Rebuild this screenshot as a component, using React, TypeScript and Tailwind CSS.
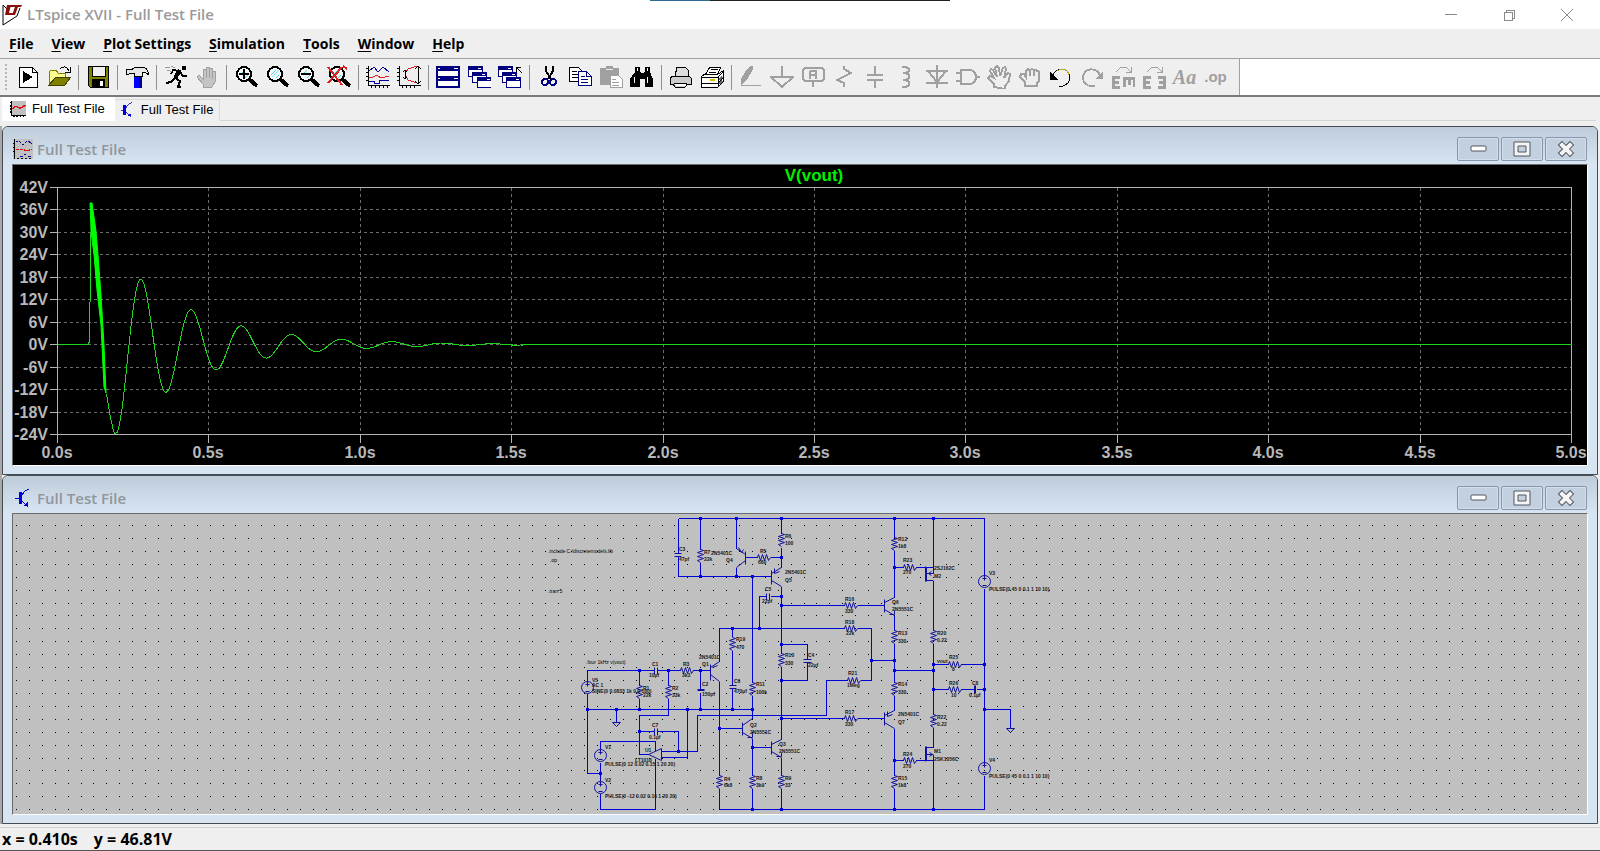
import { ReactNode } from 'react';

const menuItems = ['File', 'View', 'Plot Settings', 'Simulation', 'Tools', 'Window', 'Help'];

const GRAY = '#a0a0a0';
const NAVY = '#000080';

interface ToolIcon {
  label: string;
  art: ReactNode;
}

const lens = (
  <>
    <circle cx="10" cy="9" r="7" fill="#f0f8f8" stroke="#000" strokeWidth="2" />
    <path d="M6 10l5-5M11 13l3-3" stroke="#5dd" strokeWidth="1" />
    <path d="M15 14l8 7" stroke="#000" strokeWidth="4" />
  </>
);

const miniWindow = (x: number, y: number) => (
  <g key={x}>
    <path d={`M${x} ${y}h14v10h-14z`} fill="#fff" stroke={NAVY} strokeWidth="1" />
    <path d={`M${x} ${y}h14v4h-14z`} fill={NAVY} />
    <path d={`M${x + 10} ${y + 2}h3`} stroke="#fff" />
  </g>
);

// Each inner list is one group, groups are split by a thin separator
const toolGroups: ToolIcon[][] = [
  [
    {
      label: 'New simulation',
      art: (
        <>
          <path d="M3 2h13l5 5v15H3z" fill="#fff" stroke="#000" />
          <path d="M16 2v5h5" stroke="#000" />
          <path d="M7 6v12l10-6z" fill="#000" />
        </>
      ),
    },
    {
      label: 'Open',
      art: (
        <>
          <path d="M2 19V7l2-2h5l2 3h7v4h-8z" fill="#ffff90" stroke="#808000" />
          <path d="M2 20l7-8h15l-6 8z" fill="#808000" stroke="#404000" />
          <path d="M13 4c3-3 7-3 9 2M23 2v5h-5" stroke="#000" />
        </>
      ),
    },
  ],
  [
    {
      label: 'Save',
      art: (
        <>
          <path d="M2 1h20v21H4l-2-2z" fill="#808000" stroke="#000" />
          <path d="M6 1h13v10H6z" fill="#efefef" stroke="#000" />
          <path d="M6 14h13v8H6z" fill="#000" />
          <path d="M14 16h3v5h-3z" fill="#fff" />
        </>
      ),
    },
  ],
  [
    {
      label: 'Control panel',
      art: (
        <>
          <path d="M9 10h6v13H9z" fill="#0000ff" />
          <path d="M14 10h3v13h-3z" fill="#000090" />
          <path d="M1 4h3l2 1 5-3h6c4 0 6 3 7 8l-4-3h-3v4H9V8H6L4 9H1z" fill="#e6e6e6" stroke="#000" />
        </>
      ),
    },
  ],
  [
    {
      label: 'Run',
      art: (
        <>
          <path d="M18 1h4v4h-4z" fill="#000" />
          <path d="M11 13l5 3-2 6h3M11 13l-4 4-5 1M16 7l3 4h4M15 6l-6-1-2 4" stroke="#000" strokeWidth="2" />
          <path d="M16 5l-5 8" stroke="#000" strokeWidth="4" />
          <path d="M1 3c2-2 3 0 5 0M3 6c2-2 3 1 5 0M7 1l4 2" stroke="#999" />
        </>
      ),
    },
    {
      label: 'Halt',
      art: (
        <>
          <path d="M8 22v-3l-6-7 2-2 4 4V4h3v8V2h3v10V3h3v10V6h3v11l-3 5z" fill="#c4c4c4" stroke={GRAY} />
          <path d="M11 5v8M14 5v8M17 6v8" stroke={GRAY} />
        </>
      ),
    },
  ],
  [
    {
      label: 'Zoom in',
      art: (
        <>
          {lens}
          <path d="M5 9h10M10 4v10" stroke="#000" strokeWidth="2" />
        </>
      ),
    },
    {
      label: 'Pan',
      art: (
        <>
          {lens}
          <path d="M7 12l7-7" stroke="#8ee" />
        </>
      ),
    },
    {
      label: 'Zoom out',
      art: (
        <>
          {lens}
          <path d="M5 9h10" stroke="#000" strokeWidth="2" />
        </>
      ),
    },
    {
      label: 'Zoom to fit',
      art: (
        <>
          {lens}
          <path d="M1 2l14 18M15 2L1 18M16 1l4 3" stroke="#e02020" strokeWidth="2" />
        </>
      ),
    },
  ],
  [
    {
      label: 'Autorange',
      art: (
        <>
          <path d="M2 1v19h22" stroke="#000" />
          <path d="M0 3h2M0 7h2M0 11h2M0 15h2M5 20v3M9 20v3M13 20v3M17 20v3M21 20v3" stroke="#000" />
          <path d="M3 6l5-4 4 5 5-5 6 5" stroke="#0000a0" />
          <path d="M3 12h4l4-2 4 3 8-2" stroke="#e02020" />
          <path d="M3 16h5v2h5v-3h10" stroke="#0000a0" />
        </>
      ),
    },
    {
      label: 'Pick visible traces',
      art: (
        <>
          <path d="M2 1v19h22" stroke="#000" />
          <path d="M0 3h2M0 7h2M0 11h2M0 15h2M5 20v3M9 20v3M13 20v3M17 20v3" stroke="#000" />
          <path d="M20 1l-9 3-3 5 3 6 9 3" stroke="#e02020" />
          <path d="M8 5v9M6 7l2-2 2 2M6 12l2 2 2-2M21 1v18M18 4l3-3 3 3M18 16l3 3 3-3" stroke="#000" />
        </>
      ),
    },
  ],
  [
    {
      label: 'Tile windows',
      art: (
        <>
          <path d="M1 2h22v20H1z" fill="#fff" stroke={NAVY} strokeWidth="2" />
          <path d="M1 1h22v5H1zM1 11h22v5H1z" fill={NAVY} />
          <path d="M2 3h2M18 3h4M2 13h2M18 13h4" stroke="#fff" />
        </>
      ),
    },
    {
      label: 'Cascade windows',
      art: <>{[miniWindow(1, 1), miniWindow(5, 7), miniWindow(10, 12)]}</>,
    },
    {
      label: 'Close all windows',
      art: (
        <>
          {[miniWindow(0, 1), miniWindow(4, 7), miniWindow(8, 12)]}
          <path d="M18 7V2h5M18 2l6 6" stroke="#000" />
        </>
      ),
    },
  ],
  [
    {
      label: 'Cut',
      art: (
        <>
          <path d="M9 1v5l5 8M16 1v5l-5 8" stroke="#000" strokeWidth="2" />
          <circle cx="8" cy="17" r="3" stroke={NAVY} strokeWidth="2" />
          <circle cx="16" cy="17" r="3" stroke={NAVY} strokeWidth="2" />
        </>
      ),
    },
    {
      label: 'Copy',
      art: (
        <>
          <path d="M1 2h9l4 4v10H1z" fill="#fff" stroke="#000" />
          <path d="M4 6h5M4 9h7M4 12h7" stroke="#000" />
          <path d="M10 6h8l5 5v9H10z" fill="#fff" stroke={NAVY} />
          <path d="M18 6v5h5M13 11h4M13 14h7M13 17h7" stroke={NAVY} />
        </>
      ),
    },
    {
      label: 'Paste',
      art: (
        <>
          <path d="M1 3h6V1h7v2h6v7h-8v10H1z" fill={GRAY} />
          <path d="M7 4h7" stroke="#efefef" />
          <path d="M11 10h8l4 4v8H11z" fill="#fff" stroke={GRAY} />
          <path d="M13 14h4M13 17h7M13 20h7" stroke={GRAY} />
        </>
      ),
    },
    {
      label: 'Find',
      art: (
        <>
          <path d="M5 2h5v4l1 2h3l1-2V2h5v5l3 7v8h-8v-8h-5v8H0v-8l5-7z" fill="#000" />
          <path d="M7 3v3M17 3v3M4 12v6M17 12v6" stroke="#fff" />
        </>
      ),
    },
  ],
  [
    {
      label: 'Print',
      art: (
        <>
          <path d="M6 11L8 2h8l3 3v6" fill="#ddd" stroke="#000" />
          <path d="M4 11h16l2 2v6h-4l-2 3H6l-2-3H1v-6z" fill="#ccc" stroke="#000" />
          <path d="M5 18h13" stroke="#000" />
          <path d="M6 19h11v2H7z" fill="#fff" />
        </>
      ),
    },
    {
      label: 'Print setup',
      art: (
        <>
          <path d="M5 10l5-8h11l-4 8" fill="#fff" stroke="#000" />
          <path d="M11 4h7M9 7h7" stroke="#000" />
          <path d="M1 12l4-3h13l5-3v11l-5 5H1z" fill="#fff" stroke="#000" />
          <path d="M1 12h17v10M18 12l5-5M1 18h17l5-5" stroke="#000" />
          <path d="M10 15h5" stroke="#d0c000" strokeWidth="2" />
          <path d="M19 15l3-3M19 19l3-3" stroke="#666" strokeWidth="2" />
        </>
      ),
    },
  ],
  [
    {
      label: 'Draw wire',
      art: (
        <>
          <path d="M8 4l3-3h3v3L8 15l-5 4-1-5z" fill={GRAY} />
          <path d="M2 16v4h20" stroke={GRAY} />
        </>
      ),
    },
    {
      label: 'Ground',
      art: <path d="M12 1v11M1 12h22L12 22z" stroke={GRAY} strokeWidth="2" />,
    },
    {
      label: 'Label net',
      art: (
        <>
          <path d="M4 3h17l2 2v9l-2 2H4l-2-2V5z" stroke={GRAY} strokeWidth="2" />
          <path d="M12 16v6" stroke={GRAY} strokeWidth="2" />
          <path d="M9 14V7l1-1h5v8M9 10h6" stroke={GRAY} strokeWidth="2" />
        </>
      ),
    },
    {
      label: 'Resistor',
      art: <path d="M12 1v3l7 4-14 7 7 3v4" stroke={GRAY} strokeWidth="2" />,
    },
    {
      label: 'Capacitor',
      art: <path d="M12 1v9M12 15v8M4 10h16M4 15h16" stroke={GRAY} strokeWidth="2" />,
    },
    {
      label: 'Inductor',
      art: (
        <path
          d="M8 2h4l3 2v2l-3 2H9M9 8h3l3 2v3l-3 2H9M9 15h3l3 2v3l-3 2H8"
          stroke={GRAY}
          strokeWidth="2"
        />
      ),
    },
    {
      label: 'Diode',
      art: <path d="M12 0v23M1 6h22M3 6l9 11 9-11M1 18h22" stroke={GRAY} strokeWidth="2" />,
    },
    {
      label: 'Component',
      art: (
        <path
          d="M5 5h8c5 0 7 4 7 7s-2 7-7 7H5zM0 8h5M0 16h5M20 12h4"
          stroke={GRAY}
          strokeWidth="2"
        />
      ),
    },
    {
      label: 'Move',
      art: (
        <path
          d="M7 22v-3L1 13l2-2 4 2L3 6l1-2 2 1 4 7-2-9 2-2 2 2 1 8 3-8 2-1 1 2-2 9 4-5 2 1-1 7-4 5v3z"
          stroke={GRAY}
          strokeWidth="2"
        />
      ),
    },
    {
      label: 'Drag',
      art: (
        <path
          d="M7 21v-4l-5-5 1-3h3l2 3V6l2-2 2 2v5V5l2-1 2 1v6-5l2-1 3 2v9l-2 2v3z"
          stroke={GRAY}
          strokeWidth="2"
        />
      ),
    },
    {
      label: 'Undo',
      art: (
        <>
          <path d="M4 11c2-9 16-9 17 1 0 6-4 8-7 9h-4" stroke="#000" />
          <path d="M8 6c4-3 10-3 12 4" stroke="#b0a820" />
          <path d="M1 6v9h8z" fill="#000" />
        </>
      ),
    },
    {
      label: 'Redo',
      art: (
        <>
          <path d="M20 11C18 2 4 2 3 12c0 6 4 9 9 9h3" stroke={GRAY} strokeWidth="2" />
          <path d="M23 6v8h-8z" fill={GRAY} />
        </>
      ),
    },
    {
      label: 'Rotate',
      art: (
        <>
          <path d="M9 12H2v10h7M2 17h6M13 22v-9h10v9M18 13v7" stroke={GRAY} strokeWidth="3" />
          <path d="M5 7l5-5h5l5 5M20 2v5h-5" stroke={GRAY} />
        </>
      ),
    },
    {
      label: 'Mirror',
      art: (
        <>
          <path d="M9 12H2v10h7M2 17h6M16 12h6v10h-6M22 17h-5" stroke={GRAY} strokeWidth="3" />
          <path d="M5 7l5-5h5l5 5M20 2v5h-5" stroke={GRAY} />
        </>
      ),
    },
  ],
];

const PlotGlyph = ({ size }: { size: string }) => (
  <svg className={size} viewBox="0 0 20 20" fill="none" shapeRendering="crispEdges" aria-hidden="true">
    <path d="M2 0h18v17H2z" fill="#c0c0c0" />
    <path d="M2 0v18h18M0 2h2M0 6h2M0 10h2M0 14h2M5 18v2M9 18v2M13 18v2M17 18v2" stroke="#000" strokeWidth="2" />
    <path d="M3 10l3-3h3l3 2 3-1 4-3" stroke="#e01010" strokeWidth="2" />
  </svg>
);

const WaveGlyph = () => (
  <svg className="size-5" viewBox="0 0 20 20" fill="none" shapeRendering="crispEdges" aria-hidden="true">
    <path d="M0 0h20v20H0z" fill="#c0c0c0" />
    <path d="M1 0v20M0 4h2M0 8h2M0 12h2M4 19h2M8 19h2M12 19h2M16 19h2" stroke="#000" />
    <path d="M3 2h2M6 2l4 4 4-4M15 2l4 3M7 17h4M11 15h2M15 17h4" stroke="#0000a0" strokeDasharray="3 1" />
    <path d="M3 10h6l5 2 5-2" stroke="#e01010" strokeDasharray="3 1" />
  </svg>
);

const TransistorGlyph = ({ size }: { size: string }) => (
  <svg className={size} viewBox="0 0 20 20" fill="none" shapeRendering="crispEdges" aria-hidden="true">
    <path d="M2 10h5M8 8l4-5 4-2M8 12l7 7" stroke="#0000d8" strokeWidth="1" />
    <path d="M7 4v12" stroke="#0000d8" strokeWidth="3" />
    <path d="M15 14v4h-5z" fill="#0000d8" />
  </svg>
);

const Toolbar = () => (
  <div className="flex h-[38px] border-b-2 border-[#7a7a7a] bg-white" role="toolbar" aria-label="Main">
    <div className="flex items-center border-r border-[#a0a0a0] bg-[#efefef] pr-2">
      <div className="ml-[5px] mr-[5px] h-[26px] border-l-2 border-dotted border-[#b8b8b8]" />
      {toolGroups.map((group, i) => (
        <div key={i} className="flex items-center">
          {i > 0 && (
            <div className="flex w-2 justify-center">
              <div className="h-[25px] w-px bg-[#909090]" />
            </div>
          )}
          {group.map((tool) => (
            <button key={tool.label} type="button" aria-label={tool.label} className="flex w-[31px] justify-center">
              <svg className="size-6" viewBox="0 0 24 24" fill="none" shapeRendering="crispEdges">
                {tool.art}
              </svg>
            </button>
          ))}
        </div>
      ))}
      <button
        type="button"
        aria-label="Text"
        className="w-[31px] font-['Liberation_Serif',serif] text-[20px]/[24px] font-bold italic text-[#a0a0a0]"
      >
        Aa
      </button>
      <button
        type="button"
        aria-label="SPICE directive"
        className="w-[31px] font-['Liberation_Sans',sans-serif] text-[15px]/[24px] font-bold text-[#a0a0a0]"
      >
        .op
      </button>
    </div>
  </div>
);

const DocumentTabs = () => (
  <div className="flex h-[29px] items-start bg-[#efefef] pl-0.5 pr-1 font-['Liberation_Sans',sans-serif] text-[13px]" role="tablist">
    <button type="button" role="tab" aria-selected="true" className="flex h-6 items-center gap-1.5 bg-white pl-2 pr-2.5">
      <PlotGlyph size="size-4" />
      Full Test File
    </button>
    <button
      type="button"
      role="tab"
      aria-selected="false"
      className="mt-0.5 flex h-[21px] items-center gap-1.5 border-r border-t border-[#dadada] pl-1 pr-1.5"
    >
      <TransistorGlyph size="size-4" />
      Full Test File
    </button>
    <div className="h-6 flex-1 border-b border-[#d4d4d4]" />
  </div>
);

const frameButton =
  'flex h-6 w-[42px] items-center justify-center rounded-[2px] border border-[#8796ad] bg-[#c3d0df] shadow-[inset_0_0_0_1px_#d5dfea]';

const WindowFrame = ({ title, icon, children }: { title: string; icon: ReactNode; children: ReactNode }) => (
  <section className="flex min-h-0 flex-1 flex-col rounded-t-[6px] border border-[#444b52] bg-[#d7e4f2] px-[9px] pb-2">
    <header className="-mx-[9px] flex h-[37px] shrink-0 items-center rounded-t-[5px] bg-linear-to-b from-[#bfcddb] to-[#d7e4f2] px-2.5 pt-1.5">
      <span className="flex">{icon}</span>
      <h2 className="ml-1 flex-1 text-[15px]/[20px] font-semibold text-[#90969c]">{title}</h2>
      <div className="flex gap-0.5">
        <button type="button" aria-label="Minimize" className={frameButton}>
          <svg className="h-[7px] w-[17px]" viewBox="0 0 17 7">
            <rect x="1" y="1" width="15" height="5" rx="1" fill="#fff" stroke="#50565e" />
          </svg>
        </button>
        <button type="button" aria-label="Maximize" className={frameButton}>
          <svg className="h-4 w-[18px]" viewBox="0 0 18 16">
            <path
              d="M1 1h16v14H1zM5 5v6h8V5z"
              fill="#f4f4f4"
              fillRule="evenodd"
              stroke="#50565e"
              strokeWidth="1"
            />
          </svg>
        </button>
        <button type="button" aria-label="Close" className={frameButton}>
          <svg className="h-4 w-[18px]" viewBox="0 0 18 16" fill="none" strokeLinecap="square">
            <path d="M5 4l8 8M13 4l-8 8" stroke="#50565e" strokeWidth="6" />
            <path d="M5 4l8 8M13 4l-8 8" stroke="#f4f4f4" strokeWidth="4" />
          </svg>
        </button>
      </div>
    </header>
    <div className="min-h-0 flex-1 border border-b-white border-l-[#6b6b6b] border-r-white border-t-[#6b6b6b]">
      {children}
    </div>
  </section>
);

const voltTicks = [42, 36, 30, 24, 18, 12, 6, 0, -6, -12, -18, -24];
const timeTicks = ['0.0s', '0.5s', '1.0s', '1.5s', '2.0s', '2.5s', '3.0s', '3.5s', '4.0s', '4.5s', '5.0s'];

const tickX = (i: number) => Math.round(44 + i * 151.4);
const tickY = (i: number) => Math.round(22 + i * 22.45);

// Damped oscillation after the first swing, flat once it has died out
const ringing = () => {
  let d = 'M93 229L97 252';
  for (let x = 99; x <= 520; x += 1) {
    const t = x - 103;
    const y = 179 + 89 * Math.exp(-0.0125 * t) * Math.cos((2 * Math.PI * t) / 50.2);
    d += `L${x} ${y.toFixed(1)}`;
  }
  return `${d}L521 179H1558`;
};

const WaveformPlot = () => (
  <svg className="block size-full bg-black" viewBox="0 0 1574 300" role="img" aria-label="V(vout) transient waveform">
    <g shapeRendering="crispEdges" fill="none" transform="translate(.5 .5)">
      <g stroke="#6c6c6c" strokeDasharray="3 3">
        {voltTicks.slice(1, -1).map((v, i) => (
          <path key={v} d={`M44 ${tickY(i + 1)}H1558`} />
        ))}
        {timeTicks.slice(1, -1).map((t, i) => (
          <path key={t} d={`M${tickX(i + 1)} 22V269`} />
        ))}
      </g>
      <path d="M44 22H1558V269H44z" stroke="#b4b4b4" />
      {voltTicks.map((v, i) => (
        <path key={v} d={`M36 ${tickY(i)}H44`} stroke="#b4b4b4" />
      ))}
      {timeTicks.map((t, i) => (
        <path key={t} d={`M${tickX(i)} 269V277`} stroke="#b4b4b4" />
      ))}
      <path d="M44 179H75L76 175L77 100L78 38" stroke="#1ed61e" />
      <path d={ringing()} stroke="#1ed61e" />
    </g>
    <path
      d="M77 38H79L83 66L85 90L88 130L91 180L92 205L93 228L91 222L88 160L84 125L81 90L78 66z"
      fill="#00ff00"
      stroke="#00ff00"
    />
    <g className="font-['Liberation_Sans',sans-serif] text-[16px] font-bold" fill="#b8b8b8">
      {voltTicks.map((v, i) => (
        <text key={v} x="35" y={tickY(i) + 6} textAnchor="end">
          {v}V
        </text>
      ))}
      {timeTicks.map((t, i) => (
        <text key={t} x={tickX(i)} y="293" textAnchor="middle">
          {t}
        </text>
      ))}
      <text x="801" y="16" className="text-[17px]" textAnchor="middle" fill="#00f000">
        V(vout)
      </text>
    </g>
  </svg>
);

const gridDots = () => {
  let d = '';
  for (let r = 0; r < 23; r++) {
    for (let c = 0; c < 122; c++) {
      d += `M${Math.round(16 + c * 12.91)} ${Math.round(525 + r * 12.92)}h1v1h-1z`;
    }
  }
  return d;
};

const wires = [
  'M678 518H984M678 518V553M678 556V576H771M700 518V549M700 562V576M736 518V548M736 567V576',
  'M745 557H757M770 557H781M781 518V533M781 547V567M781 586V653M781 666V739M781 757V775M781 788V809',
  'M759 628V596H766M770 596H781M752 576V682M752 695V718M752 738V775M752 788V809',
  'M719 661V628H844M719 681V775M719 788V809H984M719 728H742M752 747H771',
  'M732 628V636M732 650V685M732 688V709M700 670V689M700 692V709',
  'M587 680V670H654M657 670H680M692 670H710M587 693V773H600M587 709H752',
  'M639 670V685M639 698V709M668 670V685M668 698V715H639V754H648',
  'M616 709V722M639 731H654M657 731H678V751M661 751H697V715H826V680H847M661 757H687V709',
  'M655 750V741H600V749M600 762V780M600 793V809H655V758',
  'M781 605H844M857 605H884M857 628H871V680H860M871 660H894M781 644H807V659M807 662V680H781',
  'M781 718H844M857 718H884M894 518V537M894 550V597M894 615V630M894 643V682M894 695V710M894 728V775M894 788V809',
  'M894 567H903M915 567H933M933 518V573M933 580V630M933 643V714M933 727V747M933 754V809M894 760H903M915 760H933',
  'M894 670H933M933 664H948M960 664H984M933 689H948M960 689H973M976 689H984',
  'M984 518V575M984 588V762M984 775V809M984 709H1010V728',
];

const junctions: [number, number][] = [
  [700, 518], [736, 518], [781, 518], [894, 518], [933, 518], [781, 557], [700, 576], [736, 576], [752, 576],
  [781, 596], [781, 605], [732, 628], [759, 628], [781, 644], [871, 660], [894, 660], [894, 670], [933, 670],
  [933, 664], [984, 664], [933, 689], [984, 689], [639, 670], [668, 670], [700, 670], [587, 709], [616, 709],
  [639, 709], [687, 709], [700, 709], [732, 709], [752, 709], [984, 709], [639, 731], [678, 751], [719, 728],
  [752, 747], [781, 680], [781, 718], [600, 773], [894, 567], [894, 760], [752, 809], [781, 809], [894, 809],
  [933, 809],
];

const uprightResistors: [number, number][] = [
  [700, 549], [781, 533], [752, 682], [732, 637], [781, 653], [639, 685], [668, 685], [719, 775], [752, 775],
  [781, 775], [894, 537], [894, 630], [894, 682], [894, 775], [933, 630], [933, 714],
];

const flatResistors: [number, number][] = [
  [757, 557], [680, 670], [844, 605], [844, 628], [847, 680], [844, 718], [903, 567], [903, 760], [948, 664],
  [948, 689],
];

const sources: [number, number][] = [[587, 687], [600, 755], [600, 787], [984, 581], [984, 768]];

const symbols = [
  // capacitors
  'M674 553H681M674 556H681M766 593V600M769 593V600M729 685H736M729 688H736M697 689H704M697 690H704',
  'M654 667V674M657 667V674M654 728V735M657 728V735M803 659H811M803 662H811M974 685V693M975 685V693',
  // bipolar transistors
  'M745 551V564M745 554L736 548M745 560L736 567M771 570V584M771 573L781 567M771 580L781 586',
  'M710 664V680M710 667L719 661M710 674L719 681M742 722V735M742 725L752 718M742 732L752 738',
  'M771 741V754M771 744L781 739M771 751L781 757M884 599V612M884 602L894 597M884 609L894 615',
  'M884 712V725M884 715L894 710M884 722L894 728',
  'M738 547L741 552L743 549M774 573L779 571M774 568V573M712 667L717 665M747 737H752V733M776 756H781V752',
  'M889 614H894V610M887 716L892 714M887 711V716',
  // mosfets
  'M925 566V581M926 567V581M926 573H933M926 580H933M931 571L928 573L931 575',
  'M925 746V761M926 746V760M926 747H933M926 754H933M929 752L932 754L929 756',
  // op amp
  'M648 754L661 748V760z',
  // grounds
  'M612 722H620L616 726zM1006 728H1014L1010 732z',
];

const directives: [number, number, string][] = [
  [548, 553, '.include C:/discretemodels.lib'], [550, 562, '.op'], [548, 593, '.tran 5'],
  [586, 664, '.four 1kHz v(vout)'],
];

const labels: [number, number, string][] = [
  [679, 551, 'C3'], [679, 561, '47pf'], [704, 554, 'R7'], [704, 561, '22k'], [711, 555, '2N5401C'], [726, 562, 'Q4'],
  [760, 553, 'R5'], [758, 564, '680'], [785, 538, 'R6'], [785, 545, '100'], [785, 574, '2N5401C'], [785, 582, 'Q5'],
  [765, 591, 'C5'], [762, 603, '22pf'], [736, 641, 'R19'], [736, 649, '470'], [699, 659, '2N5401C'], [702, 666, 'Q1'],
  [652, 666, 'C1'], [649, 677, '10µf'], [683, 666, 'R3'], [682, 677, '3k3'], [702, 686, 'C2'], [702, 696, '150pf'],
  [734, 683, 'C6'], [734, 693, '470µf'], [756, 686, 'R11'], [756, 694, '100k'], [643, 690, 'R1'], [643, 697, '22k'],
  [672, 690, 'R2'], [672, 697, '33k'], [592, 682, 'V5'], [592, 687, 'AC 1'], [592, 693, 'SINE(0 0.0833 1k 0 0 180)'],
  [652, 727, 'C7'], [649, 739, '0.1µf'], [605, 749, 'V1'], [645, 752, 'U1'], [635, 762, 'LT1018'],
  [605, 766, 'PULSE(0 12 0.02 0.15 1 20 20)'], [605, 782, 'V2'], [605, 798, 'PULSE(0 -12 0.02 0.16 1 20 20)'],
  [750, 727, 'Q2'], [750, 734, '2N5551C'], [779, 746, 'Q3'], [779, 753, '2N5551C'], [724, 781, 'R4'], [724, 787, '6k8'],
  [756, 780, 'R8'], [756, 787, '3k9'], [785, 780, 'R9'], [785, 787, '33'], [785, 657, 'R10'], [785, 665, '330'],
  [808, 657, 'C4'], [808, 667, '22µf'], [845, 601, 'R16'], [845, 613, '330'], [845, 624, 'R18'], [846, 635, '22k'],
  [848, 675, 'R21'], [847, 687, '1Meg'], [845, 714, 'R17'], [845, 726, '330'], [898, 541, 'R12'], [898, 548, '1k8'],
  [903, 562, 'R23'], [903, 574, '270'], [934, 570, '2SJ162C'], [934, 578, 'M2'], [892, 604, 'Q6'], [892, 611, '2N5551C'],
  [898, 635, 'R13'], [898, 643, '330.'], [937, 635, 'R20'], [937, 642, '0.22'], [937, 663, 'vout'], [949, 659, 'R25'],
  [952, 671, '8'], [949, 685, 'R26'], [951, 697, '10'], [972, 685, 'C8'], [969, 697, '0.1µf'], [898, 686, 'R14'],
  [898, 694, '330.'], [898, 716, '2N5401C'], [898, 724, 'Q7'], [937, 719, 'R22'], [937, 726, '0.22'],
  [934, 753, 'M1'], [934, 761, '2SK1056C'], [903, 756, 'R24'], [903, 768, '270'], [898, 780, 'R15'], [898, 787, '1k8'],
  [989, 575, 'V3'], [989, 591, 'PULSE(0 45 0 0.1 1 10 10)'], [989, 762, 'V4'], [989, 778, 'PULSE(0 45 0 0.1 1 10 10)'],
];

const Schematic = () => (
  <svg className="block size-full bg-[#c0c0c0]" viewBox="13 514 1574 300" role="img" aria-label="Amplifier schematic">
    <g shapeRendering="crispEdges" fill="none">
      <path d={gridDots()} fill="#000" />
      <path d={wires.join('')} stroke="#0000d8" transform="translate(.5 .5)" />
      {junctions.map(([x, y]) => (
        <path key={`${x}-${y}`} d={`M${x - 1} ${y - 1}h3v3h-3z`} fill="#0000e0" />
      ))}
    </g>
    <g fill="none" stroke="#1010a0" transform="translate(.5 .5)">
      <path d={symbols.join('')} />
      {uprightResistors.map(([x, y]) => (
        <path key={`${x}-${y}`} d={`M${x} ${y}l3 1l-6 2l6 2l-6 2l6 2l-6 2l3 2`} />
      ))}
      {flatResistors.map(([x, y]) => (
        <path key={`${x}-${y}`} d={`M${x} ${y}l1 -3l2 6l2 -6l2 6l2 -6l2 6l2 -3`} />
      ))}
      {sources.map(([x, y]) => (
        <g key={`${x}-${y}`}>
          <circle cx={x} cy={y} r="6" />
          <path d={`M${x - 2} ${y - 3}h4M${x} ${y - 6}v5M${x - 2} ${y + 4}h4`} />
        </g>
      ))}
    </g>
    <g className="font-['Liberation_Sans',sans-serif] text-[5px]" fill="#000">
      {directives.map(([x, y, text]) => (
        <text key={text} x={x} y={y}>
          {text}
        </text>
      ))}
    </g>
    <g className="font-['Liberation_Sans',sans-serif] text-[5px] font-bold" fill="#181818">
      {labels.map(([x, y, text]) => (
        <text key={`${x}-${y}`} x={x} y={y}>
          {text}
        </text>
      ))}
    </g>
  </svg>
);

export default function App() {
  return (
    <div className="flex h-screen flex-col bg-[#efefef] font-['Open_Sans','Noto_Sans',sans-serif] text-black">
      <header className="relative flex h-[29px] shrink-0 items-center bg-white">
        <div className="absolute inset-x-0 top-0 flex h-px">
          <div className="ml-[40.6%] w-[3.75%] bg-[#2e6b94]" />
          <div className="w-[15%] bg-[#222]" />
        </div>
        <svg className="ml-0.5 h-[22px] w-5" viewBox="0 0 20 22" fill="none" aria-hidden="true">
          <path d="M1 1v20l14-9 3-8M1 1l6 6" stroke="#000" />
          <path d="M5 1h4L7 9h4l-1 2H3zM9 1h11l-1 2h-3l-3 8h-3l3-8h-5z" fill="#8a1010" />
        </svg>
        <h1 className="ml-[5px] flex-1 text-[15px] font-semibold text-[#9a9a9a]">LTspice XVII - Full Test File</h1>
        <div className="flex h-full">
          <button type="button" aria-label="Minimize" className="flex w-[58px] items-center justify-center">
            <span className="h-px w-3 bg-[#8a8a8a]" />
          </button>
          <button type="button" aria-label="Restore" className="flex w-[58px] items-center justify-center">
            <svg className="size-3" viewBox="0 0 12 12" fill="none" stroke="#8a8a8a" shapeRendering="crispEdges">
              <path d="M1 3h8v8H1zM3 3V1h8v8H9" />
            </svg>
          </button>
          <button type="button" aria-label="Close" className="mr-1 flex w-[58px] items-center justify-center">
            <svg className="size-3" viewBox="0 0 12 12" stroke="#8a8a8a">
              <path d="M0 0l12 12M12 0L0 12" />
            </svg>
          </button>
        </div>
      </header>

      <nav className="flex h-[30px] shrink-0 items-center gap-[18px] border-b border-[#a0a0a0] pl-[9px] text-[14px] font-bold">
        {menuItems.map((item) => (
          <button key={item} type="button">
            <span className="underline underline-offset-2">{item[0]}</span>
            {item.slice(1)}
          </button>
        ))}
      </nav>

      <Toolbar />
      <DocumentTabs />

      <main className="flex min-h-0 flex-1 flex-col border-l-2 border-[#a8a8a8] pr-0.5">
        <WindowFrame title="Full Test File" icon={<WaveGlyph />}>
          <WaveformPlot />
        </WindowFrame>
        <WindowFrame title="Full Test File" icon={<TransistorGlyph size="size-5" />}>
          <Schematic />
        </WindowFrame>
      </main>

      <footer className="mt-[3px] flex h-6 shrink-0 items-center gap-4 border-b border-t border-b-[#555] border-t-[#d6cfcb] pl-0.5 text-[16px] font-bold">
        <span>x = 0.410s</span>
        <span>y = 46.81V</span>
      </footer>
    </div>
  );
}
